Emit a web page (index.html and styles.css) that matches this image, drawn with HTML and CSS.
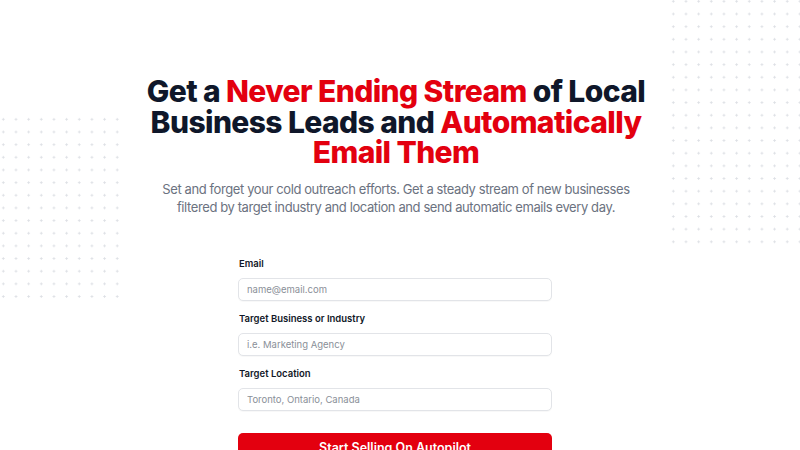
FILE: index.html
```html
<!DOCTYPE html>
<html lang="en">
<head>
<meta charset="utf-8">
<title>Autopilot Leads</title>
<link rel="stylesheet" href="styles.css">
</head>
<body>
<div class="dots dots-left"></div>
<div class="dots dots-right"></div>
<main class="hero">
  <h1 class="title">Get a <span class="red">Never Ending Stream</span> of Local Business Leads and <span class="red">Automatically Email Them</span></h1>
  <p class="sub">Set and forget your cold outreach efforts. Get a steady stream of new businesses<br>filtered by target industry and location and send automatic emails every day.</p>
  <form class="form">
    <label class="field">
      <span class="label">Email</span>
      <input class="input" type="text" placeholder="name@email.com">
    </label>
    <label class="field">
      <span class="label">Target Business or Industry</span>
      <input class="input" type="text" placeholder="i.e. Marketing Agency">
    </label>
    <label class="field">
      <span class="label">Target Location</span>
      <input class="input" type="text" placeholder="Toronto, Ontario, Canada">
    </label>
    <button class="btn" type="button">Start Selling On Autopilot</button>
  </form>
</main>
</body>
</html>
```
FILE: styles.css
```css
* { box-sizing: border-box; }
html, body { margin: 0; padding: 0; }
body {
  width: 800px;
  height: 450px;
  overflow: hidden;
  background: #ffffff;
  font-family: "Inter", "Noto Sans", sans-serif;
  color: #0f172a;
  position: relative;
}
.dots {
  position: absolute;
  background-image: radial-gradient(circle at center, #dcdfe4 0.9px, transparent 1.3px);
  background-size: 12.67px 12.67px;
  z-index: 0;
}
.dots-left { left: -3.33px; top: 112.7px; width: 126.7px; height: 190px; }
.dots-right { left: 667.4px; top: -5.3px; width: 140px; height: 253.4px; }
.hero {
  position: relative;
  z-index: 1;
  width: 792px;
  display: flex;
  flex-direction: column;
  align-items: center;
  padding-top: 76px;
}
.title {
  margin: 0;
  width: 530px;
  text-align: center;
  font-size: 30px;
  line-height: 30.5px;
  font-weight: 800;
  letter-spacing: -0.6px;
  color: #0f172a;
}
.red { color: #e3000f; }
.sub {
  margin: 12px 0 0;
  width: 560px;
  text-align: center;
  font-size: 13px;
  line-height: 18.5px;
  letter-spacing: -0.4px;
  color: #6b7280;
}
.form {
  margin-top: 41px;
  margin-right: 2px;
  width: 314px;
  display: flex;
  flex-direction: column;
  gap: 12px;
}
.field {
  display: flex;
  flex-direction: column;
  gap: 8px;
}
.label {
  font-size: 9.5px;
  line-height: 12px;
  font-weight: 600;
  color: #111827;
  padding-left: 1px;
}
.input {
  height: 23px;
  border: 1px solid #e2e4e8;
  border-radius: 5px;
  padding: 0 8px;
  font-family: inherit;
  font-size: 9.5px;
  color: #111827;
  background: #fff;
  box-shadow: 0 1px 1px rgba(0,0,0,0.03);
}
.input::placeholder { color: #8a8f98; }
.btn {
  margin-top: 10px;
  height: 30px;
  border: none;
  border-radius: 5px;
  background: #e3000f;
  color: #fff;
  font-family: inherit;
  font-size: 12.5px;
  font-weight: 600;
  padding-top: 0;
}
```
